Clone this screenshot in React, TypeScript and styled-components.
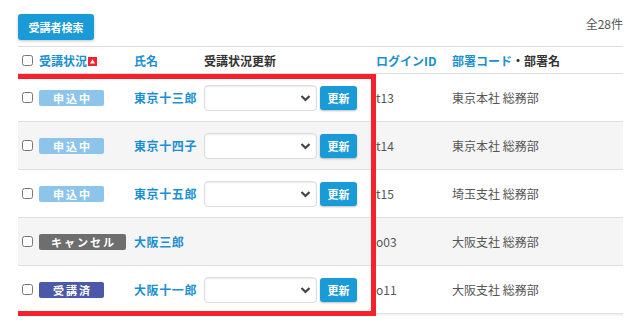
import React from 'react';
import styled, { createGlobalStyle, css } from 'styled-components';

type Status = 'applied' | 'cancel' | 'done';

interface Student {
  status: Status;
  name: string;
  loginId: string;
  dept: string;
}

const students: Student[] = [
  { status: 'applied', name: '東京十三郎', loginId: 't13', dept: '東京本社 総務部' },
  { status: 'applied', name: '東京十四子', loginId: 't14', dept: '東京本社 総務部' },
  { status: 'applied', name: '東京十五郎', loginId: 't15', dept: '埼玉支社 総務部' },
  { status: 'cancel', name: '大阪三郎', loginId: 'o03', dept: '大阪支社 総務部' },
  { status: 'done', name: '大阪十一郎', loginId: 'o11', dept: '大阪支社 総務部' },
];

const statusLabel: Record<Status, string> = {
  applied: '申込中',
  cancel: 'キャンセル',
  done: '受講済',
};

const colors = {
  blue: '#1a8fd1',
  button: '#1a9ad7',
  text: '#555',
  dark: '#333',
  line: '#dedede',
  stripe: '#f5f5f5',
  red: '#f5222d',
};

function App() {
  return (
    <>
      <GlobalStyle />
      <Page>
        <TopBar>
          <SearchButton>受講者検索</SearchButton>
          <Count>全28件</Count>
        </TopBar>

        <Table>
          <HeaderRow>
            <Cell>
              <Check type="checkbox" />
            </Cell>
            <HeadCell $link>
              受講状況
              <SortIcon>
                <svg width="9" height="9" viewBox="0 0 9 9">
                  <rect width="9" height="9" fill={colors.red} />
                  <path d="M4.5 2.3 L7 6.5 L2 6.5 Z" fill="#fff" />
                </svg>
              </SortIcon>
            </HeadCell>
            <HeadCell $link>氏名</HeadCell>
            <HeadCell>受講状況更新</HeadCell>
            <HeadCell $link>ログインID</HeadCell>
            <HeadCell>
              <HeadLink>部署コード</HeadLink>・部署名
            </HeadCell>
          </HeaderRow>

          {students.map((s, i) => (
            <Row key={s.loginId} $striped={i % 2 === 1}>
              <Cell>
                <Check type="checkbox" />
              </Cell>
              <Cell>
                <Badge $status={s.status}>{statusLabel[s.status]}</Badge>
              </Cell>
              <Cell>
                <NameLink>{s.name}</NameLink>
              </Cell>
              <Cell>
                {s.status !== 'cancel' && (
                  <UpdateGroup>
                    <SelectWrap>
                      <Select defaultValue="">
                        <option value=""></option>
                      </Select>
                      <Chevron width="11" height="8" viewBox="0 0 11 8">
                        <path d="M1.5 2 L5.5 6 L9.5 2" fill="none" stroke="#444" strokeWidth="2.2" />
                      </Chevron>
                    </SelectWrap>
                    <UpdateButton>更新</UpdateButton>
                  </UpdateGroup>
                )}
              </Cell>
              <TextCell>{s.loginId}</TextCell>
              <TextCell>{s.dept}</TextCell>
            </Row>
          ))}

          <Row $striped />

          <Highlight />
        </Table>
      </Page>
    </>
  );
}

export default App;

const GlobalStyle = createGlobalStyle`
  html, body {
    margin: 0;
    padding: 0;
    background: #fff;
    overflow: hidden;
  }

  body {
    font-family: 'Noto Sans CJK JP', 'Noto Sans', sans-serif;
    color: ${colors.text};
  }
`;

const Page = styled.div`
  width: 633px;
  height: 324px;
  box-sizing: border-box;
  padding: 14px 10px 0 18px;
`;

const TopBar = styled.div`
  display: flex;
  justify-content: space-between;
  align-items: flex-start;
  height: 32px;
`;

const SearchButton = styled.button`
  width: 76px;
  height: 26px;
  padding: 0;
  border: none;
  border-radius: 3px;
  background: ${colors.button};
  color: #fff;
  font-family: inherit;
  font-size: 11px;
  font-weight: 700;
  box-shadow: 0 1px 3px rgba(0, 0, 0, 0.25);
`;

const Count = styled.span`
  font-size: 12px;
  line-height: 20px;
  color: ${colors.text};
`;

const Table = styled.div`
  position: relative;
  height: 269px;
  overflow: hidden;
  border-top: 1px solid ${colors.line};
`;

const grid = css`
  display: grid;
  grid-template-columns: 21px 95px 70px 172px 76px 1fr;
  align-items: center;
`;

const HeaderRow = styled.div`
  ${grid};
  height: 26px;
  border-bottom: 1px solid ${colors.line};
`;

const Row = styled.div<{ $striped: boolean }>`
  ${grid};
  height: 47px;
  border-bottom: 1px solid ${colors.line};
  background: ${({ $striped }) => ($striped ? colors.stripe : '#fff')};
`;

const Cell = styled.div`
  display: flex;
  align-items: center;
  min-width: 0;
`;

const HeadCell = styled(Cell)<{ $link?: boolean }>`
  font-size: 12px;
  font-weight: 700;
  white-space: nowrap;
  color: ${({ $link }) => ($link ? colors.blue : colors.dark)};
`;

const HeadLink = styled.span`
  color: ${colors.blue};
`;

const SortIcon = styled.span`
  display: inline-flex;
  margin-left: 1px;
  margin-top: 3px;
`;

const Check = styled.input`
  width: 11px;
  height: 11px;
  margin: 0 0 0 4px;
`;

const badgeColors: Record<Status, string> = {
  applied: '#8dc4ea',
  cancel: '#6e6e6e',
  done: '#4b59a8',
};

const Badge = styled.span<{ $status: Status }>`
  display: inline-flex;
  justify-content: center;
  align-items: center;
  min-width: 65px;
  height: 16px;
  padding: 0 10px;
  box-sizing: border-box;
  border-radius: 2px;
  background: ${({ $status }) => badgeColors[$status]};
  color: #fff;
  font-size: 11px;
  font-weight: 700;
  letter-spacing: 2px;
  text-indent: 2px;
  white-space: nowrap;
`;

const NameLink = styled.span`
  color: ${colors.blue};
  font-size: 12px;
  font-weight: 700;
  letter-spacing: 0.6px;
  white-space: nowrap;
`;

const UpdateGroup = styled.div`
  display: flex;
  align-items: center;
  gap: 3px;
`;

const SelectWrap = styled.div`
  position: relative;
  display: flex;
`;

const Select = styled.select`
  appearance: none;
  width: 113px;
  height: 26px;
  border: 1px solid #dcdcdc;
  border-radius: 4px;
  background: #fff;
  box-shadow: inset 0 1px 2px rgba(0, 0, 0, 0.08);
  font-family: inherit;
  font-size: 12px;
`;

const Chevron = styled.svg`
  position: absolute;
  right: 6px;
  top: 9px;
  pointer-events: none;
`;

const UpdateButton = styled.button`
  width: 37px;
  height: 24px;
  padding: 0;
  margin-top: 1px;
  border: none;
  border-radius: 3px;
  background: ${colors.button};
  color: #fff;
  font-family: inherit;
  font-size: 11px;
  font-weight: 700;
  box-shadow: 0 1px 2px rgba(0, 0, 0, 0.25);
`;

const TextCell = styled(Cell)`
  font-size: 12px;
  color: ${colors.text};
  white-space: nowrap;
`;

const Highlight = styled.div`
  position: absolute;
  left: -9px;
  top: 27px;
  width: 367px;
  height: 242px;
  box-sizing: border-box;
  border: 5px solid ${colors.red};
  pointer-events: none;
`;
